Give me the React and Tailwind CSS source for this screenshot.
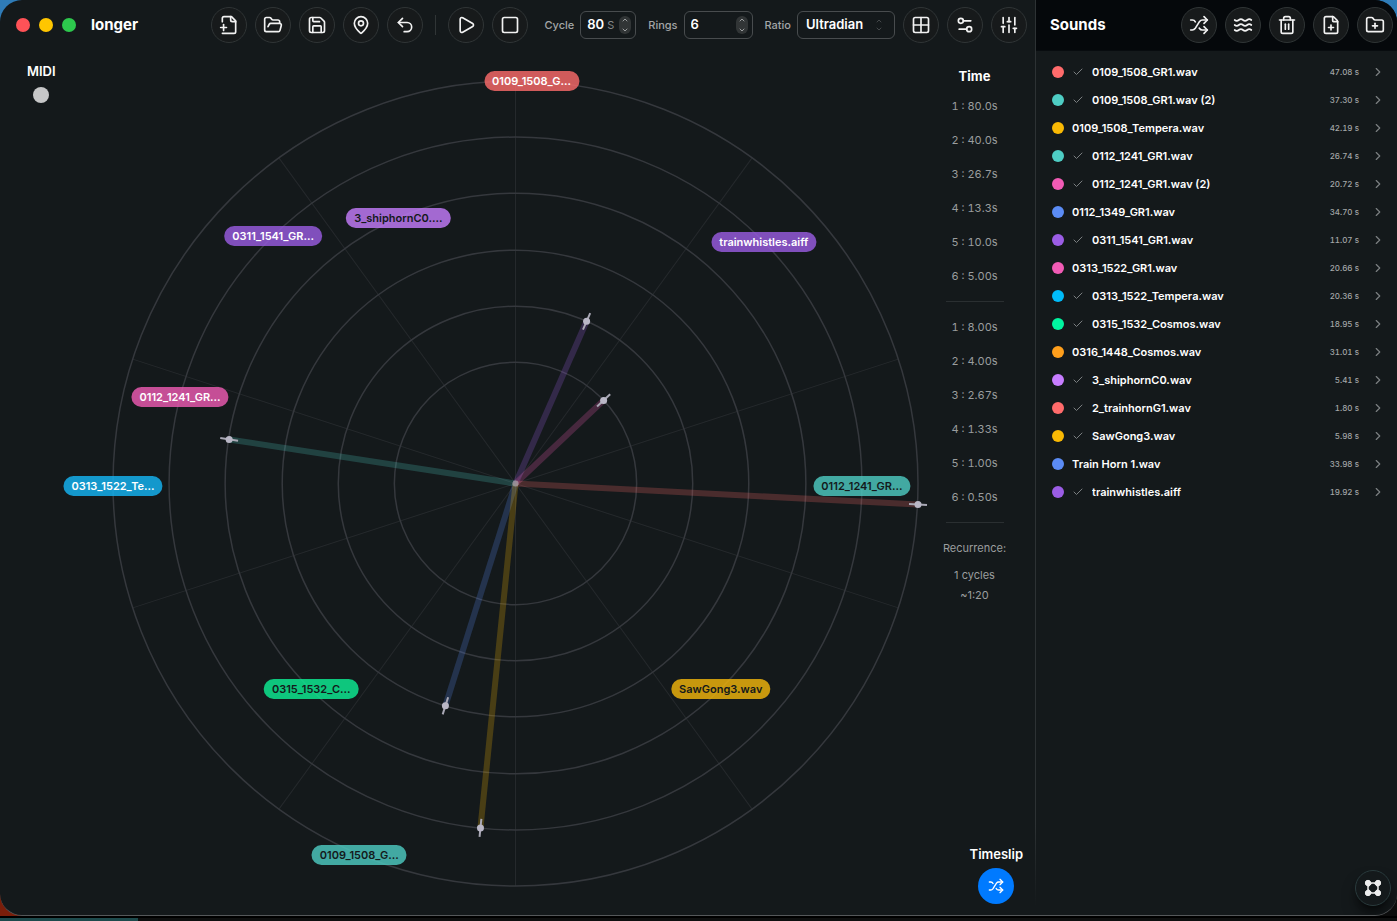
// App.jsx

import { useState } from 'react';
import {
  Check,
  ChevronDown,
  ChevronRight,
  ChevronUp,
  FilePlus,
  FolderOpen,
  FolderPlus,
  Grid2x2,
  MapPin,
  Play,
  Save,
  Settings2,
  Shuffle,
  SlidersVertical,
  Square,
  Trash2,
  Undo2,
  Waves,
} from 'lucide-react';

const SIZE = 804;
const CENTER = SIZE / 2;
const RINGS = [121, 177, 233, 290, 346, 402];
const SPOKES = Array.from({ length: 10 }, (_, i) => (i * Math.PI) / 5);

const HANDS = [
  { x: 473, y: 240, color: '#9b5de5' },
  { x: 490, y: 319, color: '#f15bb5' },
  { x: 116, y: 358, color: '#4ecdc4' },
  { x: 804, y: 423, color: '#ff6b6b' },
  { x: 332, y: 624, color: '#5b8cf5' },
  { x: 367, y: 746, color: '#f9b904' },
];

const LABELS = [
  { name: '0109_1508_G…', x: 418, y: 0, style: 'bg-[#ff6b6b]/80 text-white' },
  { name: '3_shiphornC0.…', x: 285, y: 137, style: 'bg-[#c77dff]/80 text-[#14191b]' },
  { name: '0311_1541_GR…', x: 160, y: 155, style: 'bg-[#9b5de5]/80 text-white' },
  { name: 'trainwhistles.aiff', x: 650, y: 161, style: 'bg-[#9b5de5]/80 text-white' },
  { name: '0112_1241_GR…', x: 67, y: 316, style: 'bg-[#f15bb5]/80 text-white' },
  { name: '0313_1522_Te…', x: 0, y: 404, style: 'bg-[#14b8f9]/80 text-white' },
  { name: '0112_1241_GR…', x: 748, y: 404, style: 'bg-[#4ecdc4]/80 text-[#14191b]' },
  { name: '0315_1532_C…', x: 198, y: 607, style: 'bg-[#0cf196]/80 text-[#14191b]' },
  { name: 'SawGong3.wav', x: 607, y: 607, style: 'bg-[#f5b80b]/80 text-[#14191b]' },
  { name: '0109_1508_G…', x: 246, y: 773, style: 'bg-[#4ecdc4]/80 text-[#14191b]' },
];

const SOUNDS = [
  { name: '0109_1508_GR1.wav', time: '47.08 s', color: 'bg-[#ff6b6b]', used: true },
  { name: '0109_1508_GR1.wav (2)', time: '37.30 s', color: 'bg-[#4ecdc4]', used: true },
  { name: '0109_1508_Tempera.wav', time: '42.19 s', color: 'bg-[#f9b904]', used: false },
  { name: '0112_1241_GR1.wav', time: '26.74 s', color: 'bg-[#4ecdc4]', used: true },
  { name: '0112_1241_GR1.wav (2)', time: '20.72 s', color: 'bg-[#f15bb5]', used: true },
  { name: '0112_1349_GR1.wav', time: '34.70 s', color: 'bg-[#5b8cf5]', used: false },
  { name: '0311_1541_GR1.wav', time: '11.07 s', color: 'bg-[#9b5de5]', used: true },
  { name: '0313_1522_GR1.wav', time: '20.66 s', color: 'bg-[#f15bb5]', used: false },
  { name: '0313_1522_Tempera.wav', time: '20.36 s', color: 'bg-[#00bbf9]', used: true },
  { name: '0315_1532_Cosmos.wav', time: '18.95 s', color: 'bg-[#00f5a0]', used: true },
  { name: '0316_1448_Cosmos.wav', time: '31.01 s', color: 'bg-[#ff9f1c]', used: false },
  { name: '3_shiphornC0.wav', time: '5.41 s', color: 'bg-[#c77dff]', used: true },
  { name: '2_trainhornG1.wav', time: '1.80 s', color: 'bg-[#ff6b6b]', used: true },
  { name: 'SawGong3.wav', time: '5.98 s', color: 'bg-[#f9b904]', used: true },
  { name: 'Train Horn 1.wav', time: '33.98 s', color: 'bg-[#5b8cf5]', used: false },
  { name: 'trainwhistles.aiff', time: '19.92 s', color: 'bg-[#9b5de5]', used: true },
];

const RING_TIMES = ['80.0s', '40.0s', '26.7s', '13.3s', '10.0s', '5.00s'];
const STEP_TIMES = ['8.00s', '4.00s', '2.67s', '1.33s', '1.00s', '0.50s'];

function NewFileIcon() {
  return (
    <svg width="20" height="20" viewBox="0 0 24 24" fill="none" stroke="currentColor" strokeWidth="2" strokeLinecap="round" strokeLinejoin="round">
      <path d="M4 22h14a2 2 0 0 0 2-2V7l-5-5H6a2 2 0 0 0-2 2v4" />
      <path d="M14 2v4a2 2 0 0 0 2 2h4" />
      <path d="M2 15h7" />
      <path d="M5.5 11.500v7" />
    </svg>
  );
}

function NodesIcon() {
  return (
    <svg width="20" height="20" viewBox="0 0 20 20" fill="currentColor" stroke="currentColor">
      <path d="M5 5h10v10H5z" fill="none" strokeWidth="1.500" />
      <path d="M5 8.500L8.500 5M11.500 5L15 8.500M15 11.500L11.500 15M8.500 15L5 11.500" fill="none" strokeWidth="1.500" />
      <circle cx="5" cy="5" r="2.700" />
      <circle cx="15" cy="5" r="2.700" />
      <circle cx="5" cy="15" r="2.700" />
      <circle cx="15" cy="15" r="2.700" />
    </svg>
  );
}

function RoundButton({ label, children }) {
  return (
    <button
      type="button"
      aria-label={label}
      className="flex size-9 shrink-0 items-center justify-center rounded-full border border-[#303536] bg-[#171a1b] text-[#f2f2f2] hover:bg-[#25292b]"
    >
      {children}
    </button>
  );
}

function NumberField({ id, label, unit, value, onChange, width }) {
  return (
    <div className="flex items-center gap-1.5">
      <label htmlFor={id} className="text-[11px] font-medium text-[#a3a6a7]">{label}</label>
      <div className={`flex h-7 items-center rounded-md border border-[#484c4e] pl-1.5 pr-1 ${width}`}>
        <input
          id={id}
          type="number"
          value={value}
          onChange={(e) => onChange(Number(e.target.value))}
          className={`min-w-0 appearance-none bg-transparent text-[13px] font-semibold text-white outline-none [-moz-appearance:textfield] [&::-webkit-inner-spin-button]:appearance-none ${unit ? 'w-5' : 'flex-1'}`}
        />
        {unit && <span className="flex-1 text-[11px] text-[#84888a]">{unit}</span>}
        <div className="flex h-[18px] w-3 flex-col items-center justify-between rounded-full bg-[#313536] text-[#9a9d9e]">
          <button type="button" aria-label={`Increase ${label}`} onClick={() => onChange(value + 1)}>
            <ChevronUp size={8} strokeWidth={3} />
          </button>
          <button type="button" aria-label={`Decrease ${label}`} onClick={() => onChange(value - 1)}>
            <ChevronDown size={8} strokeWidth={3} />
          </button>
        </div>
      </div>
    </div>
  );
}

function Toolbar() {
  const [cycle, setCycle] = useState(80);
  const [rings, setRings] = useState(6);

  return (
    <header className="flex h-[50px] items-center justify-between pl-4 pr-2">
      <div className="flex items-center gap-[9px]">
        <span className="size-3.5 rounded-full bg-[#ff5257]" />
        <span className="size-3.5 rounded-full bg-[#ffc600]" />
        <span className="size-3.5 rounded-full bg-[#2dc84d]" />
        <h1 className="ml-1.5 text-[15px] font-bold">longer</h1>
      </div>
      <div className="flex items-center gap-2">
        <RoundButton label="New"><NewFileIcon /></RoundButton>
        <RoundButton label="Open"><FolderOpen size={20} /></RoundButton>
        <RoundButton label="Save"><Save size={20} /></RoundButton>
        <RoundButton label="Locate"><MapPin size={20} /></RoundButton>
        <RoundButton label="Undo"><Undo2 size={20} /></RoundButton>
        <span className="mx-1 h-5 w-px bg-[#303536]" />
        <RoundButton label="Play"><Play size={20} /></RoundButton>
        <RoundButton label="Stop"><Square size={20} /></RoundButton>
        <div className="ml-2 flex items-center gap-3">
          <NumberField id="cycle" label="Cycle" unit="S" value={cycle} onChange={setCycle} width="w-14" />
          <NumberField id="rings" label="Rings" value={rings} onChange={setRings} width="w-[69px]" />
          <div className="flex items-center gap-1.5">
            <label htmlFor="ratio" className="text-[11px] font-medium text-[#a3a6a7]">Ratio</label>
            <div className="relative">
              <select
                id="ratio"
                defaultValue="Ultradian"
                className="h-7 w-[98px] appearance-none rounded-md border border-[#484c4e] bg-transparent pl-2 text-[13px] font-semibold text-white outline-none"
              >
                <option>Ultradian</option>
              </select>
              <div className="pointer-events-none absolute inset-y-0 right-3 flex flex-col justify-center text-[#44484a]">
                <ChevronUp size={8} strokeWidth={3} />
                <ChevronDown size={8} strokeWidth={3} />
              </div>
            </div>
          </div>
        </div>
        <RoundButton label="Grid"><Grid2x2 size={20} /></RoundButton>
        <RoundButton label="Settings"><Settings2 size={20} /></RoundButton>
        <RoundButton label="Mixer"><SlidersVertical size={20} /></RoundButton>
      </div>
    </header>
  );
}

function Hand({ x, y, color }) {
  const angle = Math.atan2(y - CENTER, x - CENTER);
  const dx = Math.cos(angle) * 9;
  const dy = Math.sin(angle) * 9;

  return (
    <g>
      <line x1={CENTER} y1={CENTER} x2={x} y2={y} stroke={color} strokeOpacity="0.23" strokeWidth="6" />
      <line x1={x - dx} y1={y - dy} x2={x + dx} y2={y + dy} stroke="#a9a8b5" strokeWidth="2" />
      <circle cx={x} cy={y} r="3.500" fill="#b9b7c6" />
    </g>
  );
}

function Wheel() {
  return (
    <div className="relative aspect-square w-full">
      <svg viewBox={`0 0 ${SIZE} ${SIZE}`} className="block w-full overflow-visible">
        <g stroke="#25292c">
          {SPOKES.map((a) => (
            <line key={a} x1={CENTER} y1={CENTER} x2={CENTER + Math.sin(a) * 402} y2={CENTER - Math.cos(a) * 402} />
          ))}
        </g>
        <g fill="none" stroke="#35383d" strokeWidth="1.500">
          {RINGS.map((r) => <circle key={r} cx={CENTER} cy={CENTER} r={r} />)}
        </g>
        {HANDS.map((hand) => <Hand key={hand.color} {...hand} />)}
        <circle cx={CENTER} cy={CENTER} r="3" fill="#a39aa3" fillOpacity="0.8" />
      </svg>
      {LABELS.map((label) => (
        <span
          key={`${label.name}${label.x}`}
          className={`absolute -translate-x-1/2 -translate-y-1/2 whitespace-nowrap rounded-full px-2 text-[11px] leading-5 font-semibold ${label.style}`}
          style={{ left: `${(label.x / SIZE) * 100}%`, top: `${(label.y / SIZE) * 100}%` }}
        >
          {label.name}
        </span>
      ))}
    </div>
  );
}

function TimeList({ times }) {
  return (
    <ol className="tabular-nums">
      {times.map((time, i) => (
        <li key={time} className="leading-[34px]">{i + 1} : {time}</li>
      ))}
    </ol>
  );
}

function TimeColumn() {
  return (
    <aside className="flex w-[117px] shrink-0 flex-col pt-4 pb-[11px]">
      <div className="flex flex-col items-center pr-1 text-center text-[11px] text-[#9a9d9e]">
        <h2 className="mb-[3px] text-[13px] leading-5 font-bold text-white">Time</h2>
        <TimeList times={RING_TIMES} />
        <hr className="my-2 w-[58px] border-[#2a2f31]" />
        <TimeList times={STEP_TIMES} />
        <hr className="my-2 w-[58px] border-[#2a2f31]" />
        <p className="leading-[34px]">Recurrence:</p>
        <p className="leading-5">1 cycles</p>
        <p className="leading-5">~1:20</p>
      </div>
      <div className="mt-auto mr-3 flex flex-col items-center gap-1 self-end">
        <span className="text-[13px] leading-5 font-semibold" id="timeslip">Timeslip</span>
        <button type="button" aria-labelledby="timeslip" className="flex size-9 items-center justify-center rounded-full bg-[#007aff] text-white">
          <Shuffle size={16} />
        </button>
      </div>
    </aside>
  );
}

function SoundsPanel() {
  return (
    <section className="relative flex w-[361px] shrink-0 flex-col">
      <header className="flex h-[51px] items-center justify-between border-b border-[#080c0f] bg-[#05080b] pl-3.5 pr-1">
        <h2 className="text-[15px] font-bold">Sounds</h2>
        <div className="flex gap-2">
          <RoundButton label="Shuffle"><Shuffle size={20} /></RoundButton>
          <RoundButton label="Waves"><Waves size={20} /></RoundButton>
          <RoundButton label="Delete"><Trash2 size={20} /></RoundButton>
          <RoundButton label="Add file"><FilePlus size={20} /></RoundButton>
          <RoundButton label="Add folder"><FolderPlus size={20} /></RoundButton>
        </div>
      </header>
      <ul className="py-[7px]">
        {SOUNDS.map((sound) => (
          <li key={sound.name} className="flex h-7 items-center gap-2 pl-4 pr-3">
            <span className={`size-3 rounded-full ${sound.color}`} />
            {sound.used && <Check size={12} className="text-[#7b7f81]" />}
            <span className="flex-1 truncate text-[11px] font-semibold">{sound.name}</span>
            <span className="text-[8px] font-medium tabular-nums text-[#a3a6a7]">{sound.time}</span>
            <ChevronRight size={14} className="ml-1 text-[#7b7f81]" />
          </li>
        ))}
      </ul>
      <button
        type="button"
        aria-label="Nodes"
        className="absolute right-1.5 bottom-[9px] flex size-9 items-center justify-center rounded-full border border-[#2a3b3d] bg-[#14191b] text-[#ededed] shadow-lg shadow-black/60"
      >
        <NodesIcon />
      </button>
    </section>
  );
}

export default function App() {
  return (
    <div className="flex min-h-screen flex-col bg-[linear-gradient(to_bottom,#2f7cb8_40px,transparent_40px),linear-gradient(to_right,#7a1e0a_60px,#0c0c0c_60px)] font-[Inter,sans-serif] text-white">
      <div className="flex flex-1 overflow-hidden rounded-[22px] border-b border-[#55585a] bg-[#14191b]">
        <main className="flex min-w-0 flex-1 flex-col">
          <Toolbar />
          <div className="flex flex-1">
            <div className="w-[113px] shrink-0 pt-[11px] pl-[27px]">
              <div className="flex w-fit flex-col items-center gap-1.5">
                <span className="text-[13px] leading-5 font-semibold">MIDI</span>
                <span className="size-4 rounded-full bg-[#c6c7c8]" />
              </div>
            </div>
            <div className="min-w-0 flex-1 pt-[31px]">
              <Wheel />
            </div>
            <TimeColumn />
          </div>
        </main>
        <div className="w-px bg-linear-to-b from-[#2d3234] from-90% to-transparent to-99%" />
        <SoundsPanel />
      </div>
      <div className="flex h-[5px] border-t-2 border-black bg-[#0e0f0f]">
        <span className="w-[138px] bg-[#1d4a4c]" />
      </div>
    </div>
  );
}
